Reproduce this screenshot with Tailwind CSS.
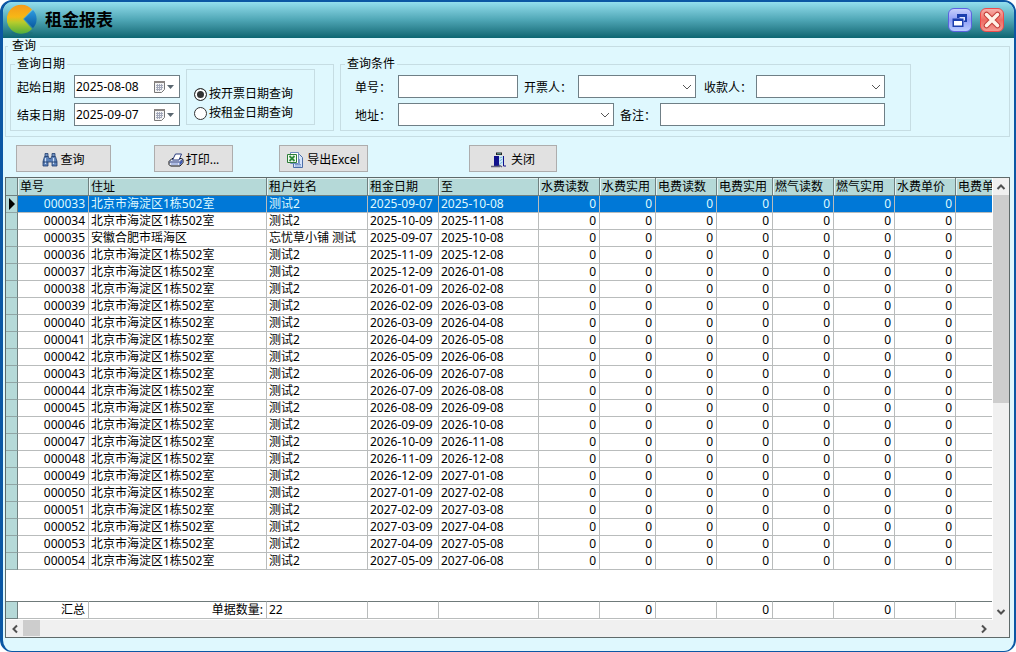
<!DOCTYPE html>
<html lang="zh-CN">
    <head>
        <meta charset="UTF-8" />
        <meta name="viewport" content="width=device-width, initial-scale=1" />
        <title>租金报表</title>
        <script src="https://cdn.jsdelivr.net/npm/@tailwindcss/browser@4"></script>
    </head>

    <body class="bg-white font-['Noto_Sans','Noto_Sans_CJK_SC',sans-serif] text-[12px] leading-4 text-black">
        <div class="flex flex-col h-screen rounded-xl border-2 border-l-[3px] border-b border-[#0b57a4] bg-[#dff8fe] overflow-hidden">
            <!-- Title bar -->
            <header class="flex items-center h-9 shrink-0 pl-1 pr-2.5 bg-linear-to-b from-[#93dfee] via-[#4ea6b5] to-[#0b6672]">
                <svg class="w-8 h-8 shrink-0" viewBox="0 0 32 32">
                    <defs>
                        <linearGradient id="pie" x1="0" y1="0" x2="0" y2="1">
                            <stop offset="0" stop-color="#f59a1b" />
                            <stop offset="0.42" stop-color="#f7b716" />
                            <stop offset="0.6" stop-color="#b7cc2c" />
                            <stop offset="1" stop-color="#4fae3c" />
                        </linearGradient>
                        <linearGradient id="wedge" x1="0" y1="0" x2="0" y2="1">
                            <stop offset="0" stop-color="#2d9be0" />
                            <stop offset="1" stop-color="#0858a0" />
                        </linearGradient>
                    </defs>
                    <ellipse cx="15" cy="29" rx="11" ry="2" fill="#1c6c70" opacity="0.35" />
                    <path d="M16 15 L25 5.500 A14.500 14.500 0 1 0 25 25 Z" fill="url(#pie)" />
                    <path d="M17 15 L26 6 A13 13 0 0 1 26 24 Z" fill="url(#wedge)" />
                </svg>
                <h1 class="ml-1.5 text-[17px] leading-6 font-bold">租金报表</h1>
                <div class="flex gap-1.5 ml-auto">
                    <button aria-label="还原" class="flex items-center justify-center w-6 h-6 rounded-md border border-[#5b62e0] bg-linear-to-b from-[#c9d0fb] via-[#8f9df6] to-[#b9cbff]">
                        <svg class="w-5 h-5" viewBox="0 0 20 20">
                            <path d="M7 4h10v8h-3V8H7z" fill="#1c3fae" />
                            <path d="M9 7h6v3.5h-2" fill="#dfe6ff" />
                            <path d="M2.5 8.500h11v8.500h-11z" fill="#1c3fae" />
                            <path d="M4 11h8v4.500h-8z" fill="#fff" />
                        </svg>
                    </button>
                    <button aria-label="关闭窗口" class="flex items-center justify-center w-6 h-6 ml-0.5 rounded-md border border-[#ee4a4a] bg-linear-to-b from-[#f6b0aa] via-[#ee6a62] to-[#f39a92]">
                        <svg class="w-5 h-5" viewBox="0 0 20 20" stroke-linecap="round">
                            <path d="M4.500 4.500l11 11M15.500 4.500l-11 11" stroke="#c23f3a" stroke-width="5.500" />
                            <path d="M4.500 4.500l11 11M15.500 4.500l-11 11" stroke="#fff1e6" stroke-width="3.500" />
                        </svg>
                    </button>
                </div>
            </header>

            <main class="flex flex-col flex-1 min-h-0 pl-0.5 pr-1 pb-[13px]">
                <!-- Filters -->
                <fieldset class="flex items-start gap-1.5 shrink-0 border border-[#c6dde3] pl-1 pt-0.5 pb-[5px]">
                    <legend class="-ml-0.5 px-1">查询</legend>

                    <fieldset class="flex items-start w-[324px] border border-[#c6dde3] pl-1.5 pt-[3px] pb-1">
                        <legend class="-ml-0.5 px-0.5">查询日期</legend>
                        <div class="flex flex-col gap-[5px]">
                            <div class="flex items-center">
                                <label for="date-from" class="w-[57px] pt-0.5">起始日期</label>
                                <div class="flex items-center w-[106px] h-[23px] border border-[#6f7f86] bg-white">
                                    <input id="date-from" type="text" value="2025-08-08" class="w-[78px] pl-px outline-none" />
                                    <button aria-label="选择起始日期">
                                        <svg class="w-[22px] h-3.5" viewBox="0 0 22 14">
                                            <path d="M1.500 1.500h10v8l-3 3h-7z" fill="#f4f4f4" stroke="#777" />
                                            <path d="M1 1h11v2h-11z" fill="#8a8583" />
                                            <path d="M3 5.500h7M3 7.500h7M3 9.500h5M4.500 4v7M6.500 4v7M8.500 4v6" stroke="#a3a8ba" />
                                            <path d="M14 5h7l-3.500 4z" fill="#5a6770" />
                                        </svg>
                                    </button>
                                </div>
                            </div>
                            <div class="flex items-center">
                                <label for="date-to" class="w-[57px] pt-0.5">结束日期</label>
                                <div class="flex items-center w-[106px] h-[23px] border border-[#6f7f86] bg-white">
                                    <input id="date-to" type="text" value="2025-09-07" class="w-[78px] pl-px outline-none" />
                                    <button aria-label="选择结束日期">
                                        <svg class="w-[22px] h-3.5" viewBox="0 0 22 14">
                                            <path d="M1.500 1.500h10v8l-3 3h-7z" fill="#f4f4f4" stroke="#777" />
                                            <path d="M1 1h11v2h-11z" fill="#8a8583" />
                                            <path d="M3 5.500h7M3 7.500h7M3 9.500h5M4.500 4v7M6.500 4v7M8.500 4v6" stroke="#a3a8ba" />
                                            <path d="M14 5h7l-3.500 4z" fill="#5a6770" />
                                        </svg>
                                    </button>
                                </div>
                            </div>
                        </div>
                        <div class="flex flex-col justify-end gap-[3px] w-[129px] h-14 -mt-1.5 ml-1.5 border border-[#c6dde3] pl-[7px] pb-[3px]">
                            <label class="flex items-center gap-0.5">
                                <input type="radio" name="date-kind" checked class="appearance-none w-[13px] h-[13px] rounded-full border border-[#333] bg-white checked:bg-[#333] checked:shadow-[inset_0_0_0_2px_white]" />
                                <span>按开票日期查询</span>
                            </label>
                            <label class="flex items-center gap-0.5">
                                <input type="radio" name="date-kind" class="appearance-none w-[13px] h-[13px] rounded-full border border-[#333] bg-white checked:bg-[#333] checked:shadow-[inset_0_0_0_2px_white]" />
                                <span>按租金日期查询</span>
                            </label>
                        </div>
                    </fieldset>

                    <fieldset class="flex flex-col gap-[5px] w-[571px] border border-[#c6dde3] pl-3.5 pt-[3px] pb-1">
                        <legend class="-ml-2.5 px-0.5">查询条件</legend>
                        <div class="flex items-center">
                            <label for="bill-no" class="w-[43px] pt-0.5">单号：</label>
                            <input id="bill-no" type="text" class="w-[120px] h-[23px] border border-[#6f7f86] bg-white px-1" />
                            <label for="drawer" class="w-[54px] ml-1.5 pt-0.5">开票人：</label>
                            <div class="grid items-center w-[118px]">
                                <select id="drawer" class="col-start-1 row-start-1 appearance-none w-full h-[23px] border border-[#6f7f86] bg-white px-1"></select>
                                <svg class="col-start-1 row-start-1 justify-self-end w-2.5 h-2 mr-1 pointer-events-none" viewBox="0 0 10 8"><path d="M1 2l4 4 4-4" fill="none" stroke="#555" /></svg>
                            </div>
                            <label for="payee" class="w-[52px] ml-2 pt-0.5">收款人：</label>
                            <div class="grid items-center w-[129px]">
                                <select id="payee" class="col-start-1 row-start-1 appearance-none w-full h-[23px] border border-[#6f7f86] bg-white px-1"></select>
                                <svg class="col-start-1 row-start-1 justify-self-end w-2.5 h-2 mr-1 pointer-events-none" viewBox="0 0 10 8"><path d="M1 2l4 4 4-4" fill="none" stroke="#555" /></svg>
                            </div>
                        </div>
                        <div class="flex items-center">
                            <label for="address" class="w-[43px] pt-0.5">地址：</label>
                            <div class="grid items-center w-[216px]">
                                <select id="address" class="col-start-1 row-start-1 appearance-none w-full h-[23px] border border-[#6f7f86] bg-white px-1"></select>
                                <svg class="col-start-1 row-start-1 justify-self-end w-2.5 h-2 mr-1 pointer-events-none" viewBox="0 0 10 8"><path d="M1 2l4 4 4-4" fill="none" stroke="#555" /></svg>
                            </div>
                            <label for="remark" class="w-10 ml-1.5 pt-0.5">备注：</label>
                            <input id="remark" type="text" class="w-[225px] h-[23px] border border-[#6f7f86] bg-white px-1" />
                        </div>
                    </fieldset>
                </fieldset>

                <!-- Toolbar -->
                <div class="flex shrink-0 mt-2 mb-[5px] ml-[11px]">
                    <button class="flex items-center justify-center gap-0.5 w-[95px] h-[27px] border border-[#adadad] bg-[#e1e1e1] pt-0.5">
                        <svg class="w-4 h-4" viewBox="0 0 16 16">
                            <path d="M3 1.500h3v3h-3zM10 1.500h3v3h-3z" fill="#6d8fc0" stroke="#23406e" stroke-width="0.800" />
                            <path d="M2.500 4.500h4l.5 2h2l.5-2h4l1.500 5v4.500h-5v-4h-4v4h-5v-4.500z" fill="#5a80b8" stroke="#23406e" stroke-width="0.800" />
                            <path d="M3.500 6v6M11.500 6v6" stroke="#cfe0f6" stroke-width="1.200" />
                            <path d="M1 10h5M10 10h5" stroke="#23406e" />
                        </svg>
                        <span>查询</span>
                    </button>
                    <button class="flex items-center justify-center gap-0.5 w-[79px] h-[27px] ml-[43px] border border-[#adadad] bg-[#e1e1e1] pt-0.5">
                        <svg class="w-4 h-4" viewBox="0 0 16 16" stroke-linejoin="round">
                            <path d="M1 9.500l3-3h9.500l1.500 1v3l-3 3.500h-9.500l-1.500-1.500z" fill="#dfe5f3" stroke="#111" />
                            <path d="M4.500 8l3-6h6l-2.500 6z" fill="#fff" stroke="#26387c" />
                            <path d="M1.500 10h10l3-2.500" fill="none" stroke="#26387c" />
                            <path d="M11.500 10.500l3-2.500v2.500l-3 3z" fill="#3b58b4" />
                            <path d="M3 12h7" stroke="#7d93d4" />
                        </svg>
                        <span>打印...</span>
                    </button>
                    <button class="flex items-center justify-center gap-1 w-[89px] h-[27px] ml-[46px] border border-[#adadad] bg-[#e1e1e1] pt-0.5">
                        <svg class="w-4 h-4 shrink-0" viewBox="0 0 16 16">
                            <path d="M6.500 2.500h6l3 3v10h-9z" fill="#d6e4fb" stroke="#4b6ea9" />
                            <path d="M8 12.500h6M8 14h6M12.500 7v5" stroke="#7e9dd0" />
                            <path d="M3.500 .5h8v11h-8z" fill="#fff" stroke="#6d8cbc" />
                            <path d="M.5 2.500h9v8h-9z" fill="#f2faef" stroke="#2d7d37" />
                            <path d="M2.500 4l5 5M7.500 4l-5 5" stroke="#2d8a3a" stroke-width="1.800" />
                        </svg>
                        <span>导出Excel</span>
                    </button>
                    <button class="flex items-center justify-center gap-1 w-[88px] h-[27px] ml-[101px] border border-[#adadad] bg-[#e1e1e1] pt-0.5">
                        <svg class="w-4 h-4" viewBox="0 0 16 16">
                            <path d="M5 .5h6v2.500h-6z" fill="#222" />
                            <path d="M6 1.300h4v1h-4z" fill="#5fa8a0" />
                            <path d="M3 4h5v10h-5z" fill="#10108c" />
                            <path d="M8 4h4v9h-4z" fill="#cfeaf8" />
                            <path d="M8.500 6l3-1M8.500 9l3-2M8.500 12l3-2" stroke="#7ab6dc" />
                            <path d="M12.500 4v10h2.500" fill="none" stroke="#10108c" />
                            <path d="M0 14.500h9M8 13l3 2" stroke="#62627c" stroke-width="1.500" />
                        </svg>
                        <span>关闭</span>
                    </button>
                </div>

                <!-- Grid with its scroll bars -->
                <div class="flex flex-col flex-1 min-h-0 border border-[#5f6a6a] bg-white">
                    <div class="flex flex-1 min-h-0">
                        <div class="flex flex-col justify-between flex-1 min-w-0 overflow-hidden">
                            <table class="table-fixed w-[1011px] border-separate border-spacing-0 whitespace-nowrap">
                                <colgroup id="grid-cols">
                                    <col class="w-3" />
                                    <col class="w-[71px]" />
                                    <col class="w-[178px]" />
                                    <col class="w-[101px]" />
                                    <col class="w-[71px]" />
                                    <col class="w-[100px]" />
                                    <col class="w-[61px]" />
                                    <col class="w-[56px]" />
                                    <col class="w-[61px]" />
                                    <col class="w-[56px]" />
                                    <col class="w-[61px]" />
                                    <col class="w-[61px]" />
                                    <col class="w-[61px]" />
                                    <col class="w-[61px]" />
                                </colgroup>
                                <thead><tr id="grid-head"></tr></thead>
                                <tbody id="grid-body"></tbody>
                            </table>
                            <!-- Totals stay at the bottom, same columns as the grid -->
                            <table class="table-fixed w-[1011px] mb-px border-separate border-spacing-0 whitespace-nowrap">
                                <colgroup id="total-cols"></colgroup>
                                <tbody><tr id="grid-foot"></tr></tbody>
                            </table>
                        </div>
                        <div class="flex flex-col w-4 shrink-0 ml-px bg-[#f0f0f0]">
                            <button aria-label="向上滚动" class="flex items-center justify-center h-[17px]">
                                <svg class="w-2.5 h-2" viewBox="0 0 10 8"><path d="M1.500 6L5 2.500 8.500 6" fill="none" stroke="#505050" stroke-width="2" /></svg>
                            </button>
                            <div class="flex-1"><div class="h-[51%] bg-[#cdcdcd]"></div></div>
                            <button aria-label="向下滚动" class="flex items-center justify-center h-[17px]">
                                <svg class="w-2.5 h-2" viewBox="0 0 10 8"><path d="M1.500 2L5 5.500 8.500 2" fill="none" stroke="#505050" stroke-width="2" /></svg>
                            </button>
                        </div>
                    </div>
                    <div class="flex h-[17px] shrink-0 pr-[17px] bg-[#f0f0f0]">
                        <button aria-label="向左滚动" class="flex items-center justify-center w-[17px]">
                            <svg class="w-2 h-2.5" viewBox="0 0 8 10"><path d="M6 1.500L2.500 5 6 8.500" fill="none" stroke="#505050" stroke-width="2" /></svg>
                        </button>
                        <div class="flex-1 flex"><div class="w-[17px] h-4 bg-[#cdcdcd]"></div></div>
                        <button aria-label="向右滚动" class="flex items-center justify-center w-[17px]">
                            <svg class="w-2 h-2.5" viewBox="0 0 8 10"><path d="M2 1.500L5.500 5 2 8.500" fill="none" stroke="#505050" stroke-width="2" /></svg>
                        </button>
                    </div>
                </div>
            </main>
        </div>

        <script>
            const heads = ['单号', '住址', '租户姓名', '租金日期', '至', '水费读数', '水费实用', '电费读数', '电费实用', '燃气读数', '燃气实用', '水费单价', '电费单价'];
            const home = '北京市海淀区1栋502室';
            const dates = [
                ['2025-09-07', '2025-10-08'],
                ['2025-10-09', '2025-11-08'],
                ['2025-09-07', '2025-10-08'],
                ['2025-11-09', '2025-12-08'],
                ['2025-12-09', '2026-01-08'],
                ['2026-01-09', '2026-02-08'],
                ['2026-02-09', '2026-03-08'],
                ['2026-03-09', '2026-04-08'],
                ['2026-04-09', '2026-05-08'],
                ['2026-05-09', '2026-06-08'],
                ['2026-06-09', '2026-07-08'],
                ['2026-07-09', '2026-08-08'],
                ['2026-08-09', '2026-09-08'],
                ['2026-09-09', '2026-10-08'],
                ['2026-10-09', '2026-11-08'],
                ['2026-11-09', '2026-12-08'],
                ['2026-12-09', '2027-01-08'],
                ['2027-01-09', '2027-02-08'],
                ['2027-02-09', '2027-03-08'],
                ['2027-03-09', '2027-04-08'],
                ['2027-04-09', '2027-05-08'],
                ['2027-05-09', '2027-06-08'],
            ];

            const marker = '<td class="h-[17px] p-0 border-r border-b border-r-[#6f8080] border-b-[#8fa5a5] bg-[#b5d9d8]">';
            const cell = 'h-[17px] py-0 border-r border-b border-[#b9bcbc] ';
            const left = cell + 'pl-0.5 pr-0';
            const right = cell + 'pl-0 pr-[3px] text-right';

            document.getElementById('total-cols').innerHTML = document.getElementById('grid-cols').innerHTML;

            document.getElementById('grid-head').innerHTML =
                '<th class="h-[18px] p-0 border-r border-b border-[#6f8080] bg-[#b5d9d8]"></th>' +
                heads.map(h => `<th class="h-[18px] pt-px pb-0 pl-0.5 pr-0 border-r border-b border-[#6f8080] bg-[#b5d9d8] text-left font-normal shadow-[inset_1px_1px_0_#e4f3f3]">${h}</th>`).join('');

            document.getElementById('grid-body').innerHTML = dates.map(([from, to], i) => {
                const other = i === 2;
                const texts = [other ? '安徽合肥市瑶海区' : home, other ? '忘忧草小铺 测试' : '测试2', from, to];
                const arrow = i === 0 ? '<svg class="w-2 h-3 ml-0.5" viewBox="0 0 8 12"><path d="M1 0l6 6-6 6z" /></svg>' : '';
                return `<tr class="${i === 0 ? 'bg-[#0078d7] text-[#dff8fe]' : ''}">` +
                    `${marker}${arrow}</td>` +
                    `<td class="${right}">0000${33 + i}</td>` +
                    texts.map(t => `<td class="${left}">${t}</td>`).join('') +
                    `<td class="${right}">0</td>`.repeat(7) +
                    `<td class="${right}"></td></tr>`;
            }).join('');

            const totals = ['汇总', '单据数量:', '22', '', '', '', '0', '', '0', '', '0', '', ''];
            document.getElementById('grid-foot').innerHTML =
                '<td class="h-[18px] p-0 border-t border-r border-b border-[#6f8080] bg-[#b5d9d8]"></td>' +
                totals.map((t, i) => `<td class="h-[18px] py-0 pl-0.5 pr-[3px] border-t border-r border-b border-t-[#6f7a7a] border-r-[#b9bcbc] border-b-[#b9bcbc] ${i === 2 ? 'text-left' : 'text-right'}">${t}</td>`).join('');
        </script>
    </body>
</html>
